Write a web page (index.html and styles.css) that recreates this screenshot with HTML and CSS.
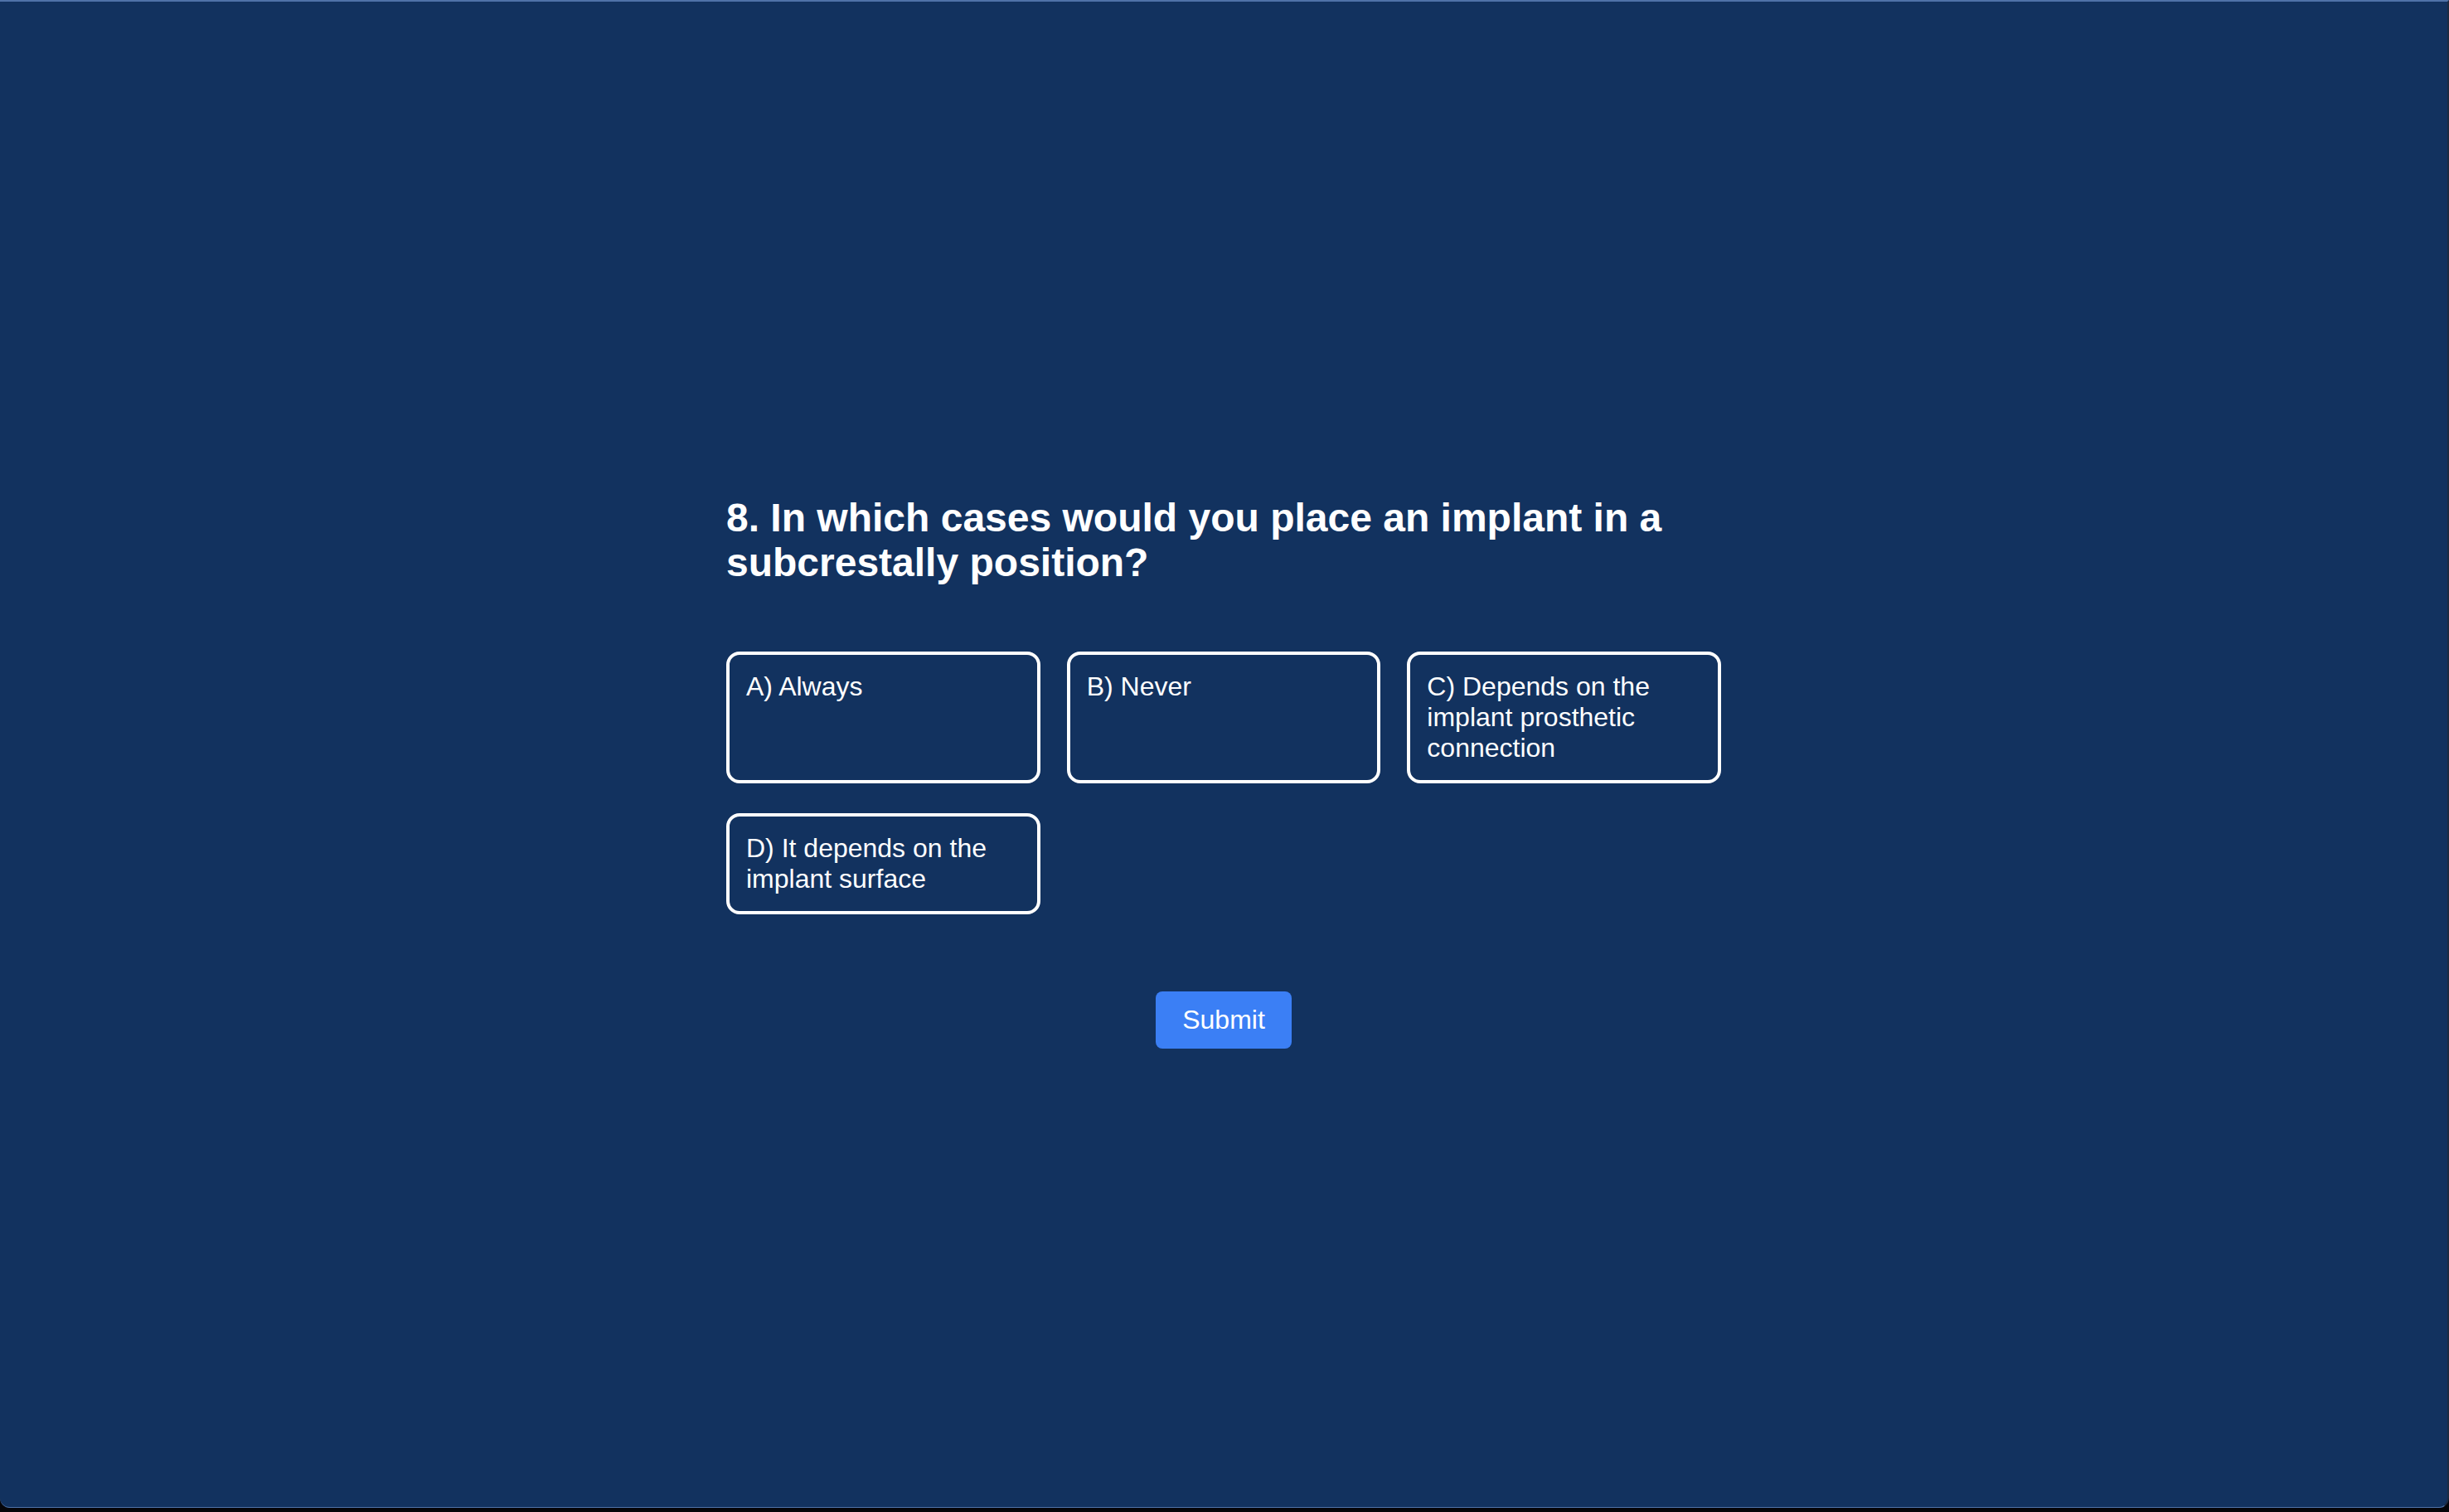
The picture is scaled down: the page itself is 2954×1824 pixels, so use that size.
FILE: index.html
```html
<!DOCTYPE html>
<html lang="en">
<head>
<meta charset="utf-8">
<title>Quiz</title>
<link rel="stylesheet" href="styles.css">
</head>
<body>
<div class="window">
  <main class="quiz">
    <h1 class="question">8. In which cases would you place an implant in a subcrestally position?</h1>
    <div class="options">
      <div class="option" role="button" tabindex="0">A) Always</div>
      <div class="option" role="button" tabindex="0">B) Never</div>
      <div class="option" role="button" tabindex="0">C) Depends on the implant prosthetic connection</div>
      <div class="option" role="button" tabindex="0">D) It depends on the implant surface</div>
    </div>
    <div class="actions">
      <button class="submit">Submit</button>
    </div>
  </main>
</div>
</body>
</html>
```

FILE: styles.css
```css
html, body {
  margin: 0;
  padding: 0;
}

body {
  background: #050509;
  width: 2954px;
  height: 1824px;
  overflow: hidden;
  font-family: "Liberation Sans", Arial, Helvetica, sans-serif;
}

.window {
  box-sizing: border-box;
  height: 1819px;
  background: #12325f;
  border-top: 2px solid #4f72a8;
  border-bottom: 1px solid #4f72a8;
  border-right: 2px solid #1d2a40;
  border-radius: 0 0 12px 12px;
  display: flex;
  align-items: center;
  justify-content: center;
  padding-top: 42px;
}

.quiz {
  width: 1200px;
  color: #ffffff;
}

.question {
  margin: 0 0 80px 0;
  font-size: 48px;
  line-height: 54px;
  font-weight: 700;
}

.options {
  display: grid;
  grid-template-columns: repeat(3, 1fr);
  column-gap: 32px;
  row-gap: 36px;
}

.option {
  box-sizing: border-box;
  border: 4px solid #ffffff;
  border-radius: 16px;
  padding: 20px;
  color: #ffffff;
  font-size: 32px;
  line-height: normal;
  text-align: left;
  cursor: pointer;
}

.actions {
  display: flex;
  justify-content: center;
  margin-top: 93px;
}

.submit {
  background: #3b7ff5;
  color: #ffffff;
  border: none;
  border-radius: 8px;
  padding: 16px 32px;
  font-family: inherit;
  font-size: 32px;
  line-height: normal;
  cursor: pointer;
}
```
